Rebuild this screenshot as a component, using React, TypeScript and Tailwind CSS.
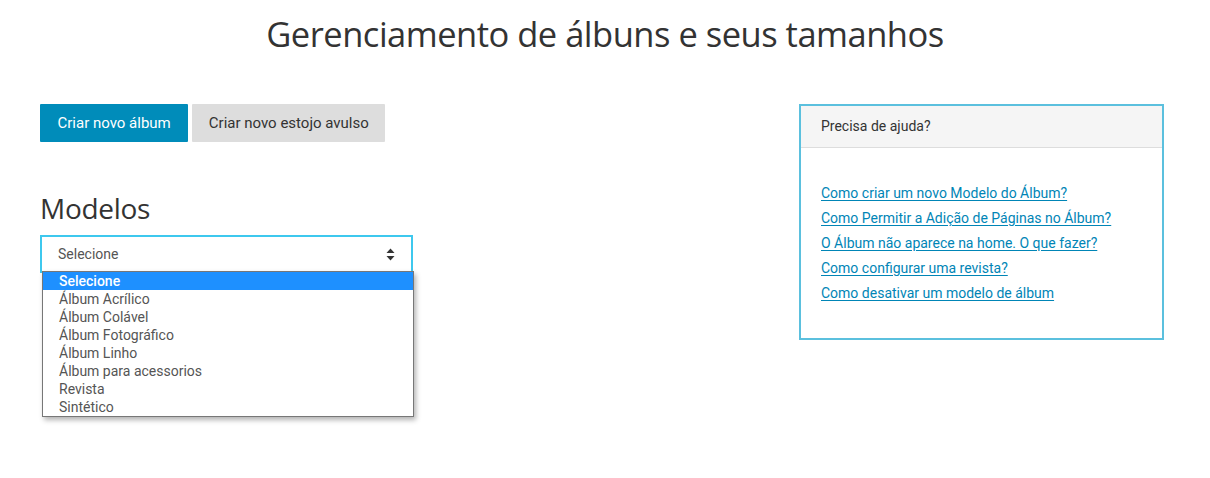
const MODELOS = [
  'Selecione',
  'Álbum Acrílico',
  'Álbum Colável',
  'Álbum Fotográfico',
  'Álbum Linho',
  'Álbum para acessorios',
  'Revista',
  'Sintético',
];

const AJUDA = [
  'Como criar um novo Modelo do Álbum?',
  'Como Permitir a Adição de Páginas no Álbum?',
  'O Álbum não aparece na home. O que fazer?',
  'Como configurar uma revista?',
  'Como desativar um modelo de álbum',
];

export default function App() {
  return (
    <div className="w-[1210px] h-[478px] bg-white font-['Roboto',sans-serif] text-[#555] overflow-hidden">
      {/* Title */}
      <h1 className="pt-[12px] text-center text-[34.5px] leading-[44px] text-[#333] font-['Open_Sans',sans-serif] tracking-[-0.5px]">
        Gerenciamento de álbuns e seus tamanhos
      </h1>

      <div className="flex justify-between pl-[40px] pr-[46px] mt-[48px]">
        {/* Left column */}
        <div className="w-[373px]">
          <div className="flex gap-[4px]">
            <button className="h-[38px] px-[17.5px] bg-[#008cba] text-white text-[15px] rounded-[1px]">
              Criar novo álbum
            </button>
            <button className="h-[38px] px-[16.5px] bg-[#dddddd] text-[#333] text-[15px] rounded-[1px]">
              Criar novo estojo avulso
            </button>
          </div>

          <h2 className="mt-[48px] text-[28px] leading-[36px] text-[#333] font-['Open_Sans',sans-serif] tracking-[-0.3px]">
            Modelos
          </h2>

          <div className="relative mt-[9px]">
            <div className="h-[38px] border-2 border-[#3ec8ee] flex items-center justify-between pl-[16px] pr-[16px] text-[14px] text-[#555]">
              <span>Selecione</span>
              <svg width="9" height="13" viewBox="0 0 9 13" className="text-[#333]">
                <path d="M4.5 0.5 L8.5 5 H0.5 Z" fill="currentColor" />
                <path d="M4.5 12.5 L8.5 8 H0.5 Z" fill="currentColor" />
              </svg>
            </div>
            {/* open native list */}
            <div className="absolute left-[2px] top-[36px] w-[372px] bg-white border border-[#777] shadow-[2px_3px_5px_rgba(0,0,0,0.3)] z-10">
              {MODELOS.map((m, i) => (
                <div
                  key={m}
                  className={`h-[18px] leading-[18px] pl-[16px] text-[14px] ${
                    i === 0 ? 'bg-[#1e90ff] text-white font-medium' : 'text-[#555]'
                  }`}
                >
                  {m}
                </div>
              ))}
            </div>
          </div>
        </div>

        {/* Help panel */}
        <div className="w-[365px] h-[236px] border-2 border-[#5bc0de]">
          <div className="h-[42px] bg-[#f5f5f5] border-b border-[#ddd] flex items-center px-[20px] text-[14px] text-[#333]">
            Precisa de ajuda?
          </div>
          <ul className="px-[20px] pt-[32px] flex flex-col">
            {AJUDA.map(a => (
              <li key={a} className="h-[25px] leading-[25px]">
                <a href="#" className="text-[14px] text-[#0085b6] underline underline-offset-[2px]">
                  {a}
                </a>
              </li>
            ))}
          </ul>
        </div>
      </div>
    </div>
  );
}
